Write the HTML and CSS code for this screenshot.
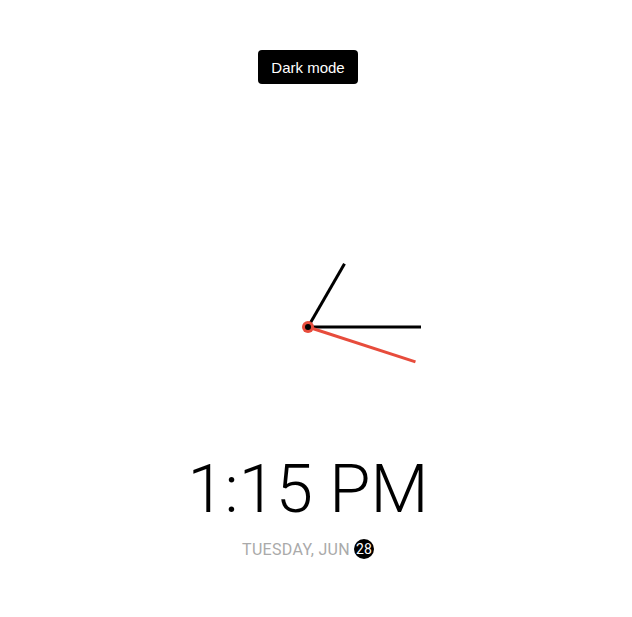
FILE: index.html
```
<!DOCTYPE html>
<html lang="en">
<head>
<meta charset="utf-8">
<title>Clock</title>
<link rel="stylesheet" href="styles.css">
</head>
<body>
<div class="page">
  <button class="toggle">Dark mode</button>
  <div class="clock-container">
    <div class="clock">
      <div class="needle hour"></div>
      <div class="needle minute"></div>
      <div class="needle second"></div>
      <div class="center-point"></div>
    </div>
    <div class="time">1:15 PM</div>
    <div class="date">Tuesday, Jun <span class="circle">28</span></div>
  </div>
</div>
</body>
</html>
```
FILE: styles.css
```
html, body {
  margin: 0;
  padding: 0;
  background: #fff;
}

body {
  font-family: Roboto, "Liberation Sans", sans-serif;
  color: #000;
  height: 617px;
  overflow: hidden;
}

.page {
  display: flex;
  flex-direction: column;
  align-items: center;
  padding-top: 50px;
  padding-right: 16px;
}

.toggle {
  background: #000;
  color: #fff;
  border: 0;
  border-radius: 4px;
  padding: 0 13px;
  height: 34px;
  font-family: "Liberation Sans", Arial, sans-serif;
  font-size: 15px;
  cursor: pointer;
}

.clock-container {
  display: flex;
  flex-direction: column;
  align-items: center;
  margin-top: 130px;
}

.clock {
  position: relative;
  width: 226px;
  height: 226px;
}

.needle {
  position: absolute;
  top: 50%;
  left: 50%;
  width: 3px;
  background: #000;
  transform-origin: bottom center;
}

.needle.hour {
  height: 73px;
  transform: translate(-50%, -100%) rotate(30deg);
}

.needle.minute {
  height: 113px;
  transform: translate(-50%, -100%) rotate(90deg);
}

.needle.second {
  height: 113px;
  background: #e74c3c;
  transform: translate(-50%, -100%) rotate(108deg);
}

.center-point {
  position: absolute;
  top: 50%;
  left: 50%;
  width: 12px;
  height: 12px;
  border-radius: 50%;
  background: #e74c3c;
  transform: translate(-50%, -50%);
}

.center-point::after {
  content: "";
  position: absolute;
  top: 50%;
  left: 50%;
  width: 6px;
  height: 6px;
  border-radius: 50%;
  background: #000;
  transform: translate(-50%, -50%);
}

.time {
  font-size: 67px;
  font-weight: 300;
  line-height: 80px;
  margin-top: 9px;
}

.date {
  color: #aaa;
  font-size: 16px;
  letter-spacing: 0.3px;
  text-transform: uppercase;
  display: flex;
  align-items: center;
  gap: 4px;
  margin-top: 10px;
}

.circle {
  display: inline-flex;
  align-items: center;
  justify-content: center;
  width: 20px;
  height: 20px;
  border-radius: 50%;
  background: #000;
  color: #fff;
  font-size: 14px;
  letter-spacing: 0;
}
```
